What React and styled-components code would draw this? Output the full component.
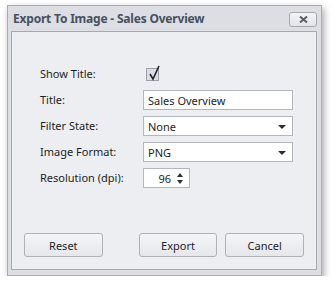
import { styled, createGlobalStyle } from "styled-components";

const GlobalStyle = createGlobalStyle`
  html, body {
    margin: 0;
    padding: 0;
    background: #ffffff;
  }
  body {
    font-family: "Noto Sans", "Open Sans", Arial, sans-serif;
    font-size: 11px;
    color: #1e1e1e;
  }
`;

const Page = styled.div`
  padding: 5px 0 0 7px;
`;

const Window = styled.div`
  width: 315px;
  height: 271px;
  box-sizing: border-box;
  border: 1px solid #a9acb3;
  background: #dcdee3;
  box-shadow: 2px 3px 7px rgba(0, 0, 0, 0.35);
  display: flex;
  flex-direction: column;
  padding: 0 4px 5px 3px;
`;

const TitleBar = styled.div`
  height: 25px;
  display: flex;
  align-items: center;
  justify-content: space-between;
  padding-left: 2px;
  h1 {
    margin: 0;
    font-size: 12px;
    font-weight: 700;
    color: #46515f;
    letter-spacing: -0.2px;
  }
`;

const CloseButton = styled.button`
  width: 28px;
  height: 15px;
  margin-top: 1px;
  padding: 0;
  border: 1px solid #a6a9b0;
  border-radius: 3px;
  background: linear-gradient(#f3f4f6, #e2e4e8);
  display: flex;
  align-items: center;
  justify-content: center;
`;

const Panel = styled.div`
  flex: 1;
  border: 1px solid #a6a9b0;
  background: #eceef1;
  display: flex;
  flex-direction: column;
  padding: 32px 12px 12px 12px;
`;

const Form = styled.div`
  display: grid;
  grid-template-columns: 103px 150px;
  grid-auto-rows: 20px;
  row-gap: 6px;
  padding-left: 16px;
  align-items: center;
`;

const Label = styled.span`
  line-height: 20px;
`;

const CheckBox = styled.span`
  position: relative;
  display: block;
  width: 13px;
  height: 13px;
  margin-left: 3px;
  box-sizing: border-box;
  border: 1px solid #9c9eaa;
  background: #dcdde4;
  svg {
    position: absolute;
    left: 1px;
    top: -4px;
  }
`;

const Field = styled.div`
  box-sizing: border-box;
  width: ${(p) => p.$width || "150px"};
  height: 20px;
  border: 1px solid #b4b6bd;
  background: #ffffff;
  display: flex;
  align-items: center;
  padding: 0 6px 0 4px;
  justify-content: ${(p) => (p.$right ? "flex-end" : "space-between")};
  gap: 6px;
`;

const Arrow = styled.span`
  width: 0;
  height: 0;
  border-left: 4px solid transparent;
  border-right: 4px solid transparent;
  border-top: 4px solid #2c2c3a;
  margin-top: 1px;
`;

const Spin = styled.span`
  display: flex;
  flex-direction: column;
  gap: 3px;
  span {
    width: 0;
    height: 0;
    border-left: 3px solid transparent;
    border-right: 3px solid transparent;
  }
  span:first-child {
    border-bottom: 4px solid #2c2c3a;
  }
  span:last-child {
    border-top: 4px solid #2c2c3a;
  }
`;

const Buttons = styled.div`
  margin-top: auto;
  display: flex;
  gap: 8px;
`;

const Button = styled.button`
  width: 79px;
  height: 24px;
  box-sizing: border-box;
  border: 1px solid #aeb1b8;
  border-radius: 3px;
  background: linear-gradient(#f5f5f7, #e5e7eb);
  font-family: inherit;
  font-size: 11px;
  color: #1e1e1e;
  margin-right: ${(p) => (p.$gap ? "28px" : "0")};
`;

const App = () => {
  return (
    <>
      <GlobalStyle />
      <Page>
        <Window>
          <TitleBar>
            <h1>Export To Image - Sales Overview</h1>
            <CloseButton>
              <svg width="9" height="7" viewBox="0 0 9 7">
                <path d="M1 0.5 L8 6.5 M8 0.5 L1 6.5" stroke="#5c5f66" strokeWidth="2" />
              </svg>
            </CloseButton>
          </TitleBar>
          <Panel>
            <Form>
              <Label>Show Title:</Label>
              <CheckBox>
                <svg width="13" height="16" viewBox="0 0 13 16">
                  <path d="M2 9 L5 14 L11 1" stroke="#23232c" strokeWidth="1.6" fill="none" />
                </svg>
              </CheckBox>
              <Label>Title:</Label>
              <Field>Sales Overview</Field>
              <Label>Filter State:</Label>
              <Field>
                None
                <Arrow />
              </Field>
              <Label>Image Format:</Label>
              <Field>
                PNG
                <Arrow />
              </Field>
              <Label>Resolution (dpi):</Label>
              <Field $width="47px" $right>
                96
                <Spin>
                  <span />
                  <span />
                </Spin>
              </Field>
            </Form>
            <Buttons>
              <Button $gap>Reset</Button>
              <Button>Export</Button>
              <Button>Cancel</Button>
            </Buttons>
          </Panel>
        </Window>
      </Page>
    </>
  );
};

export default App;
